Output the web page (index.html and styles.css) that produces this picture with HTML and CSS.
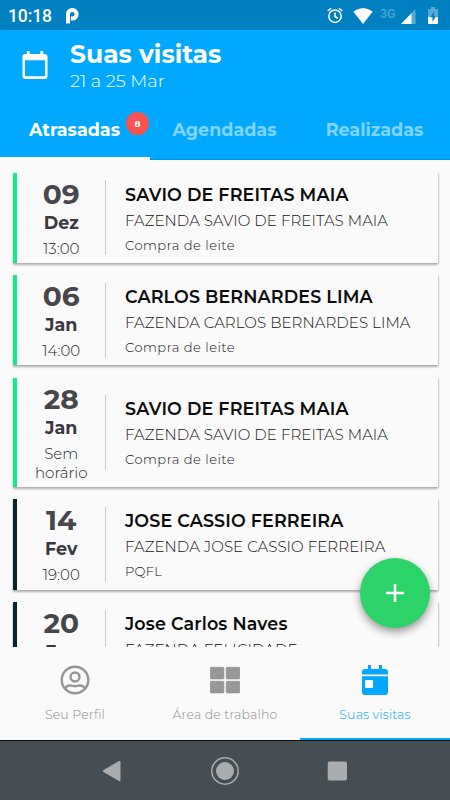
FILE: index.html
```html
<!DOCTYPE html>
<html lang="pt-BR">
<head>
<meta charset="utf-8">
<title>Suas visitas</title>
<link rel="stylesheet" href="styles.css">
</head>
<body>
<div class="status">
  <span class="clock">10:18</span>
  <svg class="p-icon" width="13" height="16" viewBox="0 0 13 16"><path d="M2 15.500V6.300a4.300 4.300 0 1 1 4.300 4.300H4.800" fill="none" stroke="#fff" stroke-width="4"/></svg>
  <svg class="alarm" width="16" height="17" viewBox="0 0 16 17" fill="none" stroke="#fff" stroke-width="1.500"><circle cx="8" cy="9.200" r="6.200"/><path d="M8 5.500v4l2.800 1.800M.7 4 4 1.200M15.300 4 12 1.200"/></svg>
  <svg class="wifi" width="20" height="16" viewBox="0 0 20 16"><path d="M.3 3.500Q10-3.500 19.700 3.500L10 16z" fill="#fff"/></svg>
  <span class="net">3G</span>
  <svg class="signal" width="15" height="15" viewBox="0 0 15 15"><path d="M0 15 14.500 0v15z" fill="#59a9d5"/><path d="M0 15 10.500 4.200V15z" fill="#fff"/></svg>
  <svg class="battery" width="10" height="17" viewBox="0 0 10 17"><path d="M3 0h4v2h2q1 0 1 1v7H0V3q0-1 1-1h2z" fill="#59a9d5"/><path d="M0 10h10v6q0 1-1 1H1q-1 0-1-1z" fill="#fff"/><path d="M6.500 4 2.800 9.500V10.500h1.700V15L7.500 10V9H5.800z" fill="#0080c0"/></svg>
</div>
<header class="header">
  <div class="heading">
    <svg width="26" height="28" viewBox="0 0 27 29"><path fill-rule="evenodd" d="M3.500 3H5V0h3v3h11V0h3v3h1.500q3 0 3 3v20q0 3-3 3h-20q-3 0-3-3V6q0-3 3-3zM3 9.500V25q0 1.300 1.300 1.300h18.400Q24 26.300 24 25V9.500z" fill="#fff"/></svg>
    <div>
      <h1 class="title">Suas visitas</h1>
      <div class="range">21 a 25 Mar</div>
    </div>
  </div>
  <nav class="tabs">
    <div class="tab tab-active"><span>Atrasadas</span><span class="badge">8</span></div>
    <div class="tab"><span>Agendadas</span></div>
    <div class="tab"><span>Realizadas</span></div>
  </nav>
</header>
<main class="list">
  <article class="card">
    <div class="date"><div class="day">09</div><div class="month">Dez</div><div class="time">13:00</div></div>
    <div class="info"><div class="name">SAVIO DE FREITAS MAIA</div><div class="farm">FAZENDA SAVIO DE FREITAS MAIA</div><div class="type">Compra de leite</div></div>
  </article>
  <article class="card">
    <div class="date"><div class="day">06</div><div class="month">Jan</div><div class="time">14:00</div></div>
    <div class="info"><div class="name">CARLOS BERNARDES LIMA</div><div class="farm">FAZENDA CARLOS BERNARDES LIMA</div><div class="type">Compra de leite</div></div>
  </article>
  <article class="card">
    <div class="date"><div class="day">28</div><div class="month">Jan</div><div class="time">Sem horário</div></div>
    <div class="info"><div class="name">SAVIO DE FREITAS MAIA</div><div class="farm">FAZENDA SAVIO DE FREITAS MAIA</div><div class="type">Compra de leite</div></div>
  </article>
  <article class="card card-dark">
    <div class="date"><div class="day">14</div><div class="month">Fev</div><div class="time">19:00</div></div>
    <div class="info"><div class="name">JOSE CASSIO FERREIRA</div><div class="farm">FAZENDA JOSE CASSIO FERREIRA</div><div class="type type-short">PQFL</div></div>
  </article>
  <article class="card card-dark">
    <div class="date"><div class="day">20</div><div class="month">Fev</div></div>
    <div class="info"><div class="name">Jose Carlos Naves</div><div class="farm">FAZENDA FELICIDADE</div></div>
  </article>
</main>
<button class="fab" aria-label="Adicionar"><svg width="18" height="18" viewBox="0 0 18 18"><path d="M9 0v18M0 9h18" stroke="#fff" stroke-width="2.500"/></svg></button>
<nav class="bottom">
  <div class="item">
    <svg width="30" height="30" viewBox="0 0 30 30" fill="none" stroke="#959595" stroke-width="2.400"><circle cx="15" cy="15" r="13.300"/><circle cx="15" cy="12" r="4.500"/><path d="M5 23.500Q7 20 11 20.500Q15 22 19 20.500Q23 20 25 23.500"/></svg>
    <span>Seu Perfil</span>
  </div>
  <div class="item">
    <svg width="30" height="30" viewBox="0 0 30 30" fill="#98989a" stroke="#88888a" stroke-width=".6"><rect x=".3" y="2.300" width="13.600" height="11.600" rx="1"/><rect x="16.200" y="2.300" width="13.600" height="11.600" rx="1"/><rect x=".3" y="16.300" width="13.600" height="11.600" rx="1"/><rect x="16.200" y="16.300" width="13.600" height="11.600" rx="1"/></svg>
    <span>Área de trabalho</span>
  </div>
  <div class="item item-active">
    <svg width="26" height="30" viewBox="0 0 26 30"><path fill-rule="evenodd" d="M3 4h3V0h3v4h8V0h3v4h3q3 0 3 3v2.500H0V7q0-3 3-3zM0 11.200h26V27q0 3-3 3H3q-3 0-3-3zM4 15q-1 0-1 1v6q0 1 1 1h6q1 0 1-1v-6q0-1-1-1z" fill="#00a6ff"/></svg>
    <span>Suas visitas</span>
  </div>
</nav>
<footer class="system">
  <svg class="back" width="19" height="22" viewBox="0 0 19 22"><path d="M1.500 10 17 1q1.500-.5 1.500 1v18q0 1.500-1.500 1L1.500 12q-1.500-1 0-2z" fill="#a9adb0"/></svg>
  <svg width="28" height="28" viewBox="0 0 28 28"><circle cx="14" cy="14" r="13.200" fill="none" stroke="#a9adb0" stroke-width="1.500"/><circle cx="14" cy="14" r="9" fill="#a9adb0"/></svg>
  <svg width="20" height="20" viewBox="0 0 20 20"><rect x=".7" y=".5" width="19.300" height="19" rx="2" fill="#a9adb0"/></svg>
</footer>
</body>
</html>
```
FILE: styles.css
```css
* { box-sizing: border-box; }
body { margin: 0; width: 450px; height: 800px; overflow: hidden; display: flex; flex-direction: column; background: #fafafa; color: #111; font-family: Montserrat, Inter, "Open Sans", sans-serif; white-space: nowrap; }
svg { display: block; flex: none; }
.status { height: 30px; flex: none; display: flex; align-items: center; background: #0080c0; color: #fff; padding: 1px 12px 0 8px; font-family: Roboto, sans-serif; }
.clock { width: 45px; font-size: 17.500px; font-weight: 500; letter-spacing: -0.1px; }
.p-icon { margin-left: 13px; }
.alarm { margin-left: 248px; }
.wifi { margin-left: 10px; }
.net { margin-left: 7px; width: 17px; font-size: 12.500px; font-weight: 500; color: #4aa5d4; padding-bottom: 5px; }
.signal { margin: 1px 0 0 4px; }
.battery { margin-left: 12px; }

.header { height: 130px; flex: none; background: #00a9ff; color: #fff; display: flex; flex-direction: column; box-shadow: inset 0 -1px #0097ea; }
.heading { height: 70px; flex: none; display: flex; gap: 22px; padding: 7px 0 0 22px; }
.heading svg { margin-top: 14px; }
.title { margin: 0; font-size: 25px; line-height: 35px; font-weight: 700; }
.range { font-size: 17.800px; line-height: 18px; font-weight: 300; }
.tabs { flex: 1; display: grid; grid-template-columns: repeat(3, 1fr); }
.tab { position: relative; display: flex; justify-content: center; font-size: 17.500px; font-weight: 700; line-height: 54px; padding: 3px 1px 0 0; color: #80d4ff; }
.tab-active { color: #fff; border-bottom: 3px solid #fff; }
.badge { position: absolute; left: 126px; top: 12px; width: 23px; height: 23px; border-radius: 50%; background: #fa5252; font-size: 9px; line-height: 23px; text-align: center; }

.list { height: 487px; flex: none; overflow: hidden; padding: 12.500px; display: flex; flex-direction: column; gap: 12.500px; }
.card { flex: none; min-height: 90px; display: flex; align-items: center; border-left: 4px solid #12eb8b; background: #fafafa; box-shadow: 0 1.500px 2px rgba(0,0,0,.3), 1px 0 1px rgba(0,0,0,.1); }
.card-dark { border-left-color: #08232c; }
.date { width: 88.500px; align-self: flex-start; padding: 5px 14px 4.250px 15px; text-align: center; color: #222227; }
.day { font-size: 28px; line-height: 33px; font-weight: 700; color: #46464b; }
.month { font-size: 17.500px; line-height: 24px; font-weight: 700; color: #38383e; }
.time { margin: 5px -6px 0; padding: 0 6px; font-size: 15px; line-height: 18.900px; font-weight: 300; white-space: normal; }
.info { height: 75px; padding: 1.500px 0 0 19px; border-left: 1px solid #ccc; }
.name { font-size: 17.500px; line-height: 26px; font-weight: 600; letter-spacing: .14px; color: #0b0b0b; }
.farm { font-size: 15px; line-height: 26px; font-weight: 300; letter-spacing: .08px; }
.type { font-size: 13px; line-height: 22px; font-weight: 300; letter-spacing: .53px; }
.type-short { letter-spacing: .3px; }

.fab { position: absolute; left: 360px; top: 557.500px; width: 70px; height: 70px; border: 0; border-radius: 50%; background: #2bd369; display: flex; align-items: center; justify-content: center; box-shadow: 0 4px 9px rgba(0,0,0,.4); }

.bottom { height: 93px; flex: none; display: grid; grid-template-columns: repeat(3, 1fr); background: #fafafa; color: #8c8c8c; font-size: 12.500px; font-weight: 300; letter-spacing: .16px; }
.item { display: flex; flex-direction: column; align-items: center; gap: 12px; padding-top: 18px; line-height: 16px; }
.item-active { color: #00a6ff; border-bottom: 2.500px solid #00a6ff; }
.system { height: 60px; flex: none; display: grid; grid-template-columns: 112px 112px 112px; justify-content: center; align-items: center; justify-items: center; background: #464d53; border-top: 1px solid #0d0d0d; }
.back { margin-right: 4px; }
```
